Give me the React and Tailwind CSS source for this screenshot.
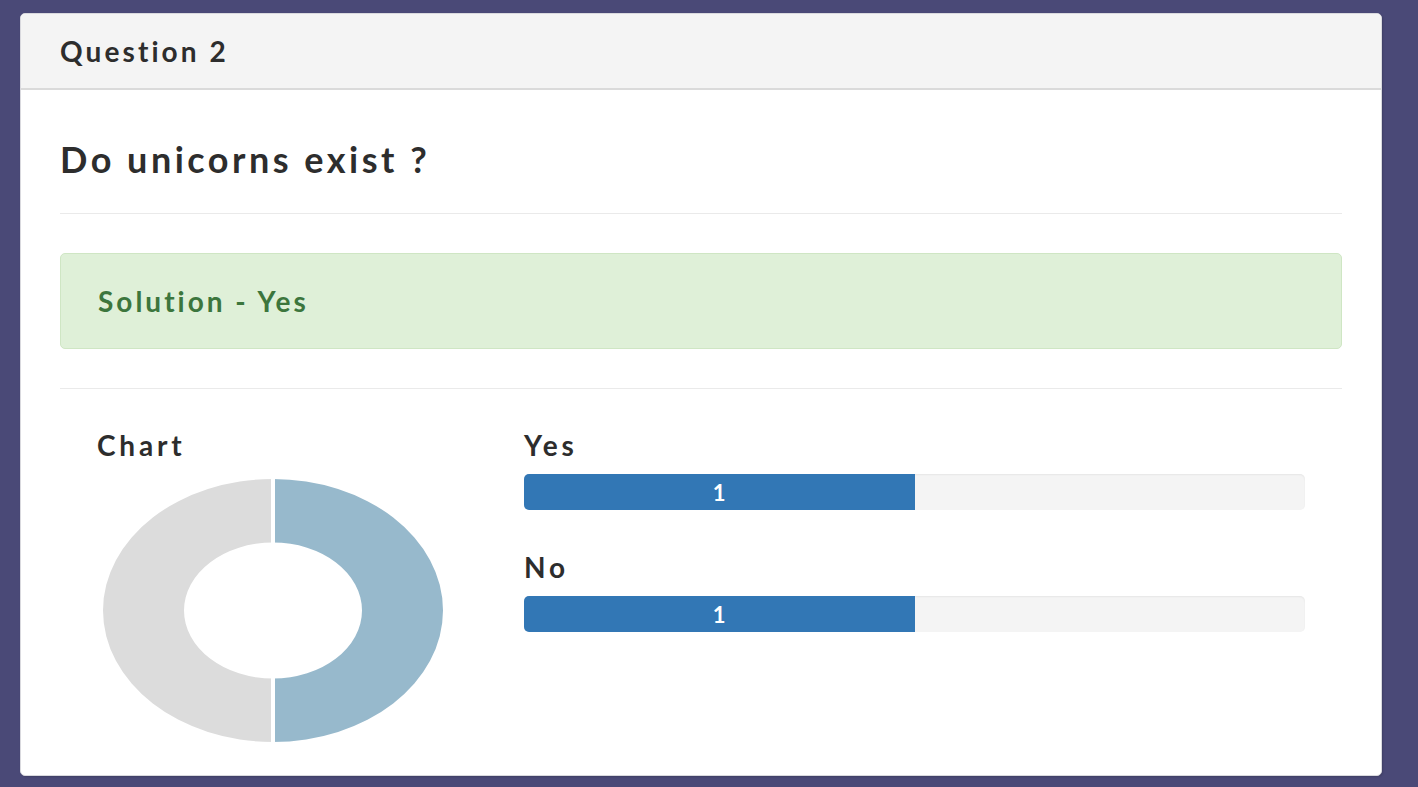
import React from 'react';

const options = [
  { label: 'Yes', count: 1, pct: 50 },
  { label: 'No', count: 1, pct: 50 },
];

const Donut = () => (
  <svg width="340" height="263" viewBox="0 0 340 263">
    {/* left half */}
    <path d="M170 0 A170 131.5 0 0 0 170 263 L170 199.5 A89 68 0 0 1 170 63.5 Z" fill="#dcdcdc" />
    {/* right half */}
    <path d="M170 0 A170 131.5 0 0 1 170 263 L170 199.5 A89 68 0 0 0 170 63.5 Z" fill="#97b9cc" />
    <rect x="168" y="0" width="4" height="263" fill="#fff" />
  </svg>
);

export default function App() {
  return (
    <div className="min-h-[787px] bg-[#4a4977] pt-[13px] pl-[20px] pr-[36px] pb-[11px] font-['Lato',sans-serif] text-[#333]">
      <div className="w-[1362px] h-[763px] bg-white border border-[#d9d9de] rounded-[5px] shadow-[1px_1px_2px_rgba(0,0,0,0.15)] overflow-hidden">
        {/* header */}
        <div className="h-[76px] bg-[#f4f4f4] border-b-2 border-[#dadada] flex items-center pl-[39px]">
          <h2 className="text-[28px] font-bold leading-none tracking-[3.1px] text-[#2d2d2d]">Question 2</h2>
        </div>

        <div className="px-[39px]">
          <h1 className="pt-[47px] pb-[31px] text-[36px] font-bold leading-[45px] tracking-[3.5px] text-[#2d2d2d]">Do unicorns exist ?</h1>
          <hr className="border-t border-[#eaeaea]" />

          <div className="mt-[39px] h-[96px] bg-[#dff0d8] border border-[#cfe6c4] rounded-[5px] flex items-center pl-[37px]">
            <span className="text-[28px] font-bold text-[#3c763d] tracking-[3px]">Solution - Yes</span>
          </div>

          <hr className="mt-[39px] border-t border-[#eaeaea]" />

          <div className="flex pt-[41px]">
            <div className="w-[464px] shrink-0 pl-[37px]">
              <h3 className="text-[28px] font-bold leading-[30px] text-[#2d2d2d] tracking-[3.8px]">Chart</h3>
              <div className="mt-[19px] pl-[6px]">
                <Donut />
              </div>
            </div>

            <div className="w-[781px] flex flex-col">
              {options.map((o, i) => (
                <div key={o.label} className={i > 0 ? 'mt-[42px]' : ''}>
                  <h4 className="text-[28px] font-bold leading-[30px] text-[#2d2d2d] tracking-[3.8px]">{o.label}</h4>
                  <div className="mt-[14px] h-[36px] bg-[#f4f4f4] rounded-[5px] overflow-hidden flex shadow-[inset_0_1px_2px_rgba(0,0,0,0.06)]">
                    <div
                      className="h-full bg-[#3277b5] flex items-center justify-center text-white text-[22px] font-bold"
                      style={{ width: `${o.pct}%` }}
                    >
                      {o.count}
                    </div>
                  </div>
                </div>
              ))}
            </div>
          </div>
        </div>
      </div>
    </div>
  );
}
